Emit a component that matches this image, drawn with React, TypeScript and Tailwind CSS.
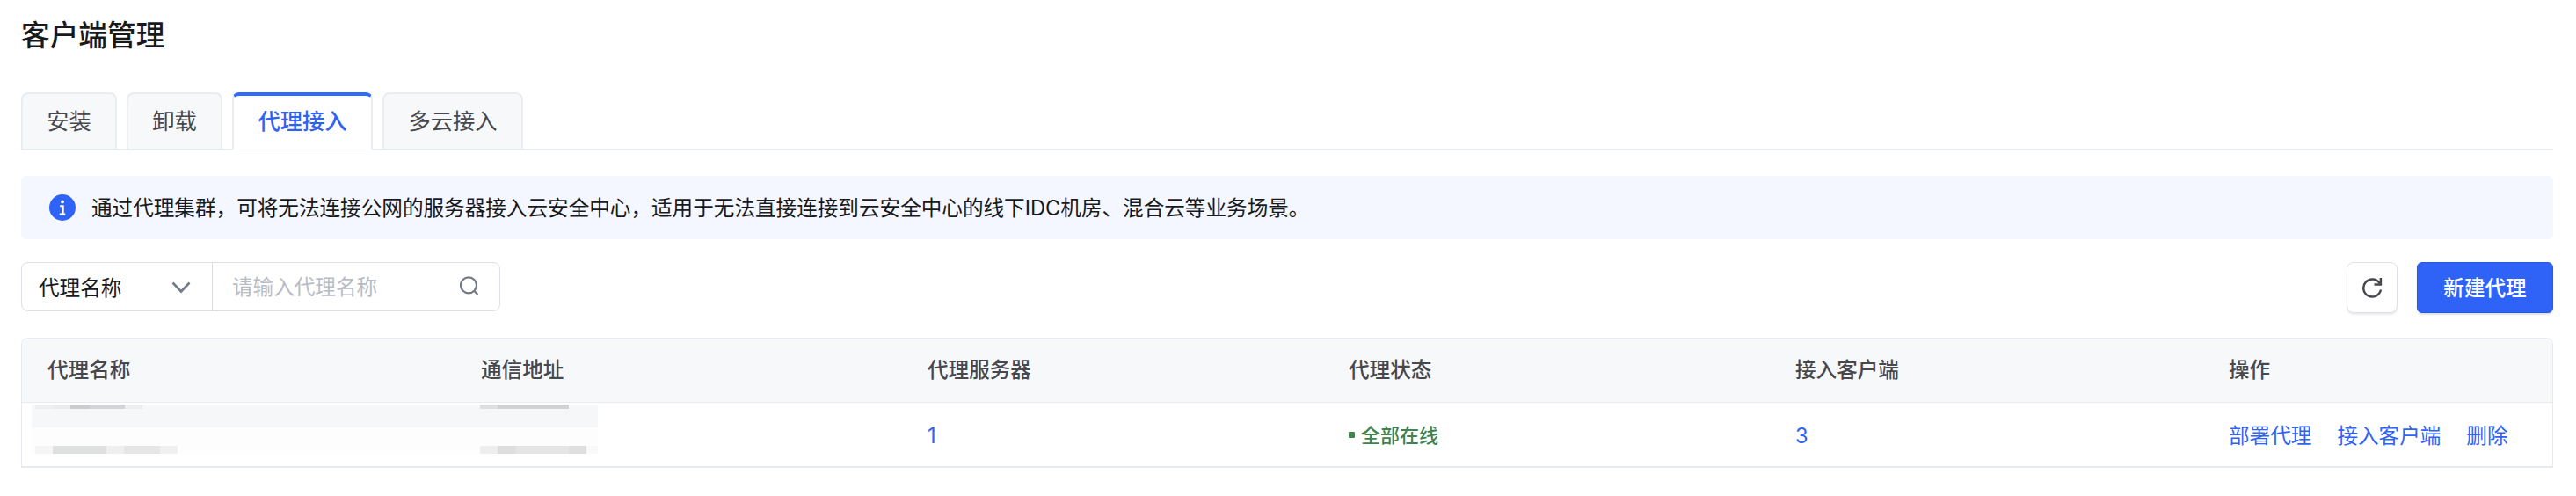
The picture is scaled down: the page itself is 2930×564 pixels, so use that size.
import React from "react";

const tabs = [
  { label: "安装", active: false, width: "w-[109px]" },
  { label: "卸载", active: false, width: "w-[109px]" },
  { label: "代理接入", active: true, width: "w-[160px]" },
  { label: "多云接入", active: false, width: "w-[160px]" },
];

function Tabs() {
  return (
    <div className="mt-[31px] flex h-[66px] gap-[11px] border-b-2 border-[#e9edf1] text-center text-[25.3px] leading-[36px]">
      {tabs.map((t) =>
        t.active ? (
          <div key={t.label} className={t.width + " -mb-[2px] h-[65px] rounded-t-lg border-x-2 border-t-4 border-x-[#e9edf1] border-t-[#2f6bff] bg-white pt-[11px] font-medium text-[#2f63f5]"}>
            {t.label}
          </div>
        ) : (
          <div key={t.label} className={t.width + " h-[64px] rounded-t-lg border-x-2 border-t-2 border-[#e9edf1] bg-[#f7f8fa] pt-[13px] text-[#46484e]"}>
            {t.label}
          </div>
        )
      )}
    </div>
  );
}

function Banner() {
  return (
    <div className="mt-[29px] flex h-[72px] items-center rounded-md bg-[#f4f7ff] pl-8">
      <svg className="h-[30px] w-[30px]" viewBox="0 0 30 30">
        <circle cx="15" cy="15" r="15" fill="#2f63f8" />
        <circle cx="15" cy="8.4" r="1.9" fill="#fff" />
        <path d="M12.2 12.3h4.5v9.2h1.6v2.2h-6.6v-2.2h2.3v-7.2h-1.8z" fill="#fff" />
      </svg>
      <p className="ml-[18px] pt-[2px] text-[23.6px] leading-8 text-[#17191c]">
        通过代理集群，可将无法连接公网的服务器接入云安全中心，适用于无法直接连接到云安全中心的线下IDC机房、混合云等业务场景。
      </p>
    </div>
  );
}

function Toolbar() {
  return (
    <div className="mt-[26px] flex h-[58px] items-start">
      <div className="flex h-[56px] w-[545px] items-center rounded-lg border border-[#dcdfe7] text-[23.6px] leading-8">
        <div className="flex h-full w-[217px] items-center border-r border-[#dcdfe7] pl-[19px] text-[#17191c]">
          <span className="pt-[3px]">代理名称</span>
          <svg className="mt-[2px] ml-[57px] h-[14px] w-[22px]" viewBox="0 0 22 14" fill="none" stroke="#737a87" strokeWidth="2.6">
            <path d="M1.5 1.5 11 11.5 20.5 1.5" />
          </svg>
        </div>
        <span className="ml-[22px] pt-[2px] text-[#b8bcc4]">请输入代理名称</span>
        <svg className="mr-[23px] mb-[3px] ml-auto h-[22px] w-[22px]" viewBox="0 0 22 22" fill="none" stroke="#737a87" strokeWidth="2.2">
          <circle cx="10" cy="10.3" r="9" />
          <path d="m16 16.5 4.5 4.5" />
        </svg>
      </div>
      <div className="ml-auto flex h-[58px] w-[58px] items-center justify-center rounded-lg border border-[#dfe1e8] bg-white pb-px shadow-[0_2px_2px_rgba(0,0,0,0.08)]">
        <svg className="h-6 w-6" viewBox="0 0 24 24" fill="none" stroke="#46484e" strokeWidth="2.5">
          <path d="M22 14.6a10 10 0 1 1-1.2-7.3" />
          <path d="M21.9 1v7.4h-7.4" />
        </svg>
      </div>
      <div className="ml-[22px] flex h-[58px] w-[155px] items-center justify-center rounded-md border border-[#2b58dc] bg-[#2f63f8] pt-px text-[23.6px] font-medium text-white shadow-[0_2px_2px_rgba(0,0,0,0.12)]">
        新建代理
      </div>
    </div>
  );
}

function MaskedCells() {
  return (
    <div className="absolute top-[2px] left-[11px] flex h-[56px] w-[644px] flex-col bg-[#fdfdfd]">
      <div className="h-[26px] bg-[#f6f7f9]">
        <div className="flex h-[5px] pl-1">
          <i className="w-5 bg-[#efeff1]" />
          <i className="w-5 bg-[#eaebec]" />
          <i className="w-[22px] bg-[#cbccce]" />
          <i className="w-10 bg-[#d3d4d7]" />
          <i className="w-5 bg-[#ecedef]" />
          <i className="ml-[384px] w-5 bg-[#dddee0]" />
          <i className="w-[81px] bg-[#d1d2d4]" />
        </div>
      </div>
      <div className="mt-auto flex h-[9px] pl-1">
        <i className="w-5 bg-[#f5f5f5]" />
        <i className="w-[61px] bg-[#dfe0e0]" />
        <i className="w-5 bg-[#efefef]" />
        <i className="w-[41px] bg-[#e6e6e6]" />
        <i className="w-5 bg-[#f0f0f0]" />
        <i className="ml-[344px] w-5 bg-[#eeeeee]" />
        <i className="w-[21px] bg-[#dedede]" />
        <i className="w-[60px] bg-[#e5e5e5]" />
        <i className="w-5 bg-[#dfdfdf]" />
        <i className="flex-1 bg-[#f9f9f9]" />
      </div>
    </div>
  );
}

const columns = "grid grid-cols-[493px_508px_479px_508px_493px_1fr] items-center pl-[29px]";

function Table() {
  return (
    <div className="mt-7 rounded-t-lg border border-b-2 border-[#e7ebf1]">
      <div className={columns + " h-[73px] rounded-t-lg border-b border-[#e7ebf1] bg-[#f7f8fa] text-[23.6px] font-medium text-[#46484e]"}>
        <span>代理名称</span>
        <span>通信地址</span>
        <span>代理服务器</span>
        <span>代理状态</span>
        <span>接入客户端</span>
        <span>操作</span>
      </div>
      <div className={columns + " relative h-[72px] pt-[3px] text-[23.6px] text-[#2f63f5]"}>
        <MaskedCells />
        <span />
        <span />
        <span>1</span>
        <span className="flex items-center text-[22px] font-medium text-[#43824e]">
          <i className="mr-[7px] mb-[3px] h-[7px] w-[7px] rounded-[1px] bg-[#43824e]" />
          全部在线
        </span>
        <span>3</span>
        <span className="flex gap-[29px] whitespace-nowrap">
          <span>部署代理</span>
          <span>接入客户端</span>
          <span>删除</span>
        </span>
      </div>
    </div>
  );
}

export default function App() {
  return (
    <div className="h-[564px] w-[2930px] overflow-hidden bg-white pt-5 pr-[26px] pl-6 font-['Inter','Noto_Sans_CJK_SC',sans-serif]">
      <h1 className="h-[54px] pt-px text-[32.7px] leading-[38px] font-medium text-[#17191c]">客户端管理</h1>
      <Tabs />
      <Banner />
      <Toolbar />
      <Table />
    </div>
  );
}
